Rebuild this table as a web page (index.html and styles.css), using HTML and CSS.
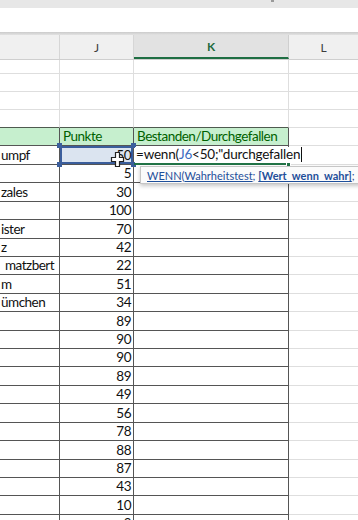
FILE: index.html
```html
<!DOCTYPE html>
<html lang="de">
<head>
<meta charset="utf-8">
<title>Excel</title>
<link rel="stylesheet" href="styles.css">
</head>
<body>
<div class="topbar"><span class="tdot"></span></div>
<div class="formula"></div>
<div class="divider"></div>
<div class="colheads">
  <div class="ch"></div>
  <div class="ch">J</div>
  <div class="ch sel">K</div>
  <div class="ch last">L</div>
</div>
<div class="sheet">
  <div class="c"></div><div class="c"></div><div class="c"></div><div class="c l"></div>
  <div class="c"></div><div class="c"></div><div class="c"></div><div class="c l"></div>
  <div class="c"></div><div class="c"></div><div class="c"></div><div class="c l"></div>
  <div class="c top"></div><div class="c top"></div><div class="c top"></div><div class="c l"></div>

  <div class="c t h"></div><div class="c t h">Punkte</div><div class="c t h">Bestanden/Durchgefallen</div><div class="c l"></div>

  <div class="c t">umpf</div>
  <div class="c t n ref">50
    <span class="hnd tl"></span><span class="hnd tr"></span><span class="hnd bl"></span><span class="hnd br"></span>
    <svg class="cursor" width="15" height="16" viewBox="0 0 15 16"><path d="M5.5 1.5h4v5h4v4h-4v5h-4v-5h-4v-4h4z" fill="#fff" stroke="#222" stroke-width="1.2"/></svg>
  </div>
  <div class="c t edit"><span class="etext">=wenn(<span class="refc">J6</span>&lt;50;"durchgefallen<span class="caret"></span></span>
    <span class="fill"></span>
    <div class="tip"><u>WENN</u>(<u>Wahrheitstest</u>; <b><u>[Wert_wenn_wahr]</u></b>; [</div>
  </div>
  <div class="c l"></div>

  <div class="c t"></div><div class="c t n">5</div><div class="c t"></div><div class="c l"></div>
  <div class="c t">zales</div><div class="c t n">30</div><div class="c t"></div><div class="c l"></div>
  <div class="c t"></div><div class="c t n">100</div><div class="c t"></div><div class="c l"></div>
  <div class="c t">ister</div><div class="c t n">70</div><div class="c t"></div><div class="c l"></div>
  <div class="c t">z</div><div class="c t n">42</div><div class="c t"></div><div class="c l"></div>
  <div class="c t ind">matzbert</div><div class="c t n">22</div><div class="c t"></div><div class="c l"></div>
  <div class="c t">m</div><div class="c t n">51</div><div class="c t"></div><div class="c l"></div>
  <div class="c t">ümchen</div><div class="c t n">34</div><div class="c t"></div><div class="c l"></div>
  <div class="c t"></div><div class="c t n">89</div><div class="c t"></div><div class="c l"></div>
  <div class="c t"></div><div class="c t n">90</div><div class="c t"></div><div class="c l"></div>
  <div class="c t"></div><div class="c t n">90</div><div class="c t"></div><div class="c l"></div>
  <div class="c t"></div><div class="c t n">89</div><div class="c t"></div><div class="c l"></div>
  <div class="c t"></div><div class="c t n">49</div><div class="c t"></div><div class="c l"></div>
  <div class="c t"></div><div class="c t n">56</div><div class="c t"></div><div class="c l"></div>
  <div class="c t"></div><div class="c t n">78</div><div class="c t"></div><div class="c l"></div>
  <div class="c t"></div><div class="c t n">88</div><div class="c t"></div><div class="c l"></div>
  <div class="c t"></div><div class="c t n">87</div><div class="c t"></div><div class="c l"></div>
  <div class="c t"></div><div class="c t n">43</div><div class="c t"></div><div class="c l"></div>
  <div class="c t"></div><div class="c t n">10</div><div class="c t"></div><div class="c l"></div>
  <div class="c t"></div><div class="c t n">9</div><div class="c t"></div><div class="c l"></div>
</div>
</body>
</html>
```
FILE: styles.css
```css
* { box-sizing: border-box; }
html, body { margin: 0; padding: 0; }
body {
  width: 358px;
  height: 520px;
  overflow: hidden;
  background: #fff;
  font-family: Lato, "Liberation Sans", sans-serif;
  color: #111;
}
.topbar {
  height: 8px;
  background: #e7e7e7;
  display: flex;
  padding-left: 271px;
}
.tdot { width: 3px; height: 2px; background: #9a9a9a; }
.formula { height: 24px; background: #fff; }
.divider { height: 3px; background: linear-gradient(#cbcbcb, #e2e2e2); }

.colheads {
  display: grid;
  grid-template-columns: 60px 74px 155px 69px;
  height: 25px;
  background: #f0f0f0;
  border-bottom: 1px solid #cfcfcf;
}
.ch {
  display: flex;
  align-items: center;
  justify-content: center;
  font-size: 12px;
  color: #3c3c3c;
  border-right: 1px solid #d6d6d6;
}
.ch.sel {
  background: #e2e2e2;
  color: #1f6b3d;
  font-weight: bold;
  border-bottom: 2px solid #1f6e43;
  border-right-color: #cfcfcf;
}
.ch.last { border-right: none; }

.sheet {
  display: grid;
  grid-template-columns: 60px 74px 155px 69px;
  grid-template-rows: 14px 18px 18px 18px;
  grid-auto-rows: 18.43px;
}
.c {
  border-right: 1px solid #dedede;
  border-bottom: 1px solid #dedede;
  font-size: 13.5px;
  letter-spacing: -0.5px;
  line-height: 15px;
  display: flex;
  align-items: flex-end;
  padding: 0 2px 1px 1px;
  white-space: nowrap;
  overflow: hidden;
}
.c.l { border-right: none; }
.c.top { border-bottom-color: #4f5a4f; }
.c.t { border-color: #555; }
.c.n { justify-content: flex-end; }
.c.h { background: #c6efce; color: #006100; padding-left: 3px; }
.c.ind { padding-left: 5px; }

.c.ref {
  position: relative;
  overflow: visible;
  background: #dbe4f0;
  box-shadow: inset 0 0 0 2px #3b5e9c;
}
.hnd {
  position: absolute;
  width: 5px;
  height: 5px;
  background: #3b5e9c;
}
.hnd.tl { left: -3px; top: -3px; }
.hnd.tr { right: -3px; top: -3px; }
.hnd.bl { left: -3px; bottom: -3px; }
.hnd.br { right: -3px; bottom: -3px; }
.cursor { position: absolute; left: 50px; top: 5px; }

.c.edit {
  position: relative;
  z-index: 2;
  overflow: visible;
  border-bottom: 2px solid #217346;
  padding-bottom: 0;
  letter-spacing: -0.2px;
}
.etext {
  display: flex;
  align-items: center;
  background: #fff;
  padding: 0 2px 1px 1px;
  height: 16px;
}
.refc { color: #3c6cc0; }
.caret {
  display: inline-block;
  width: 1px;
  height: 15px;
  background: #111;
  margin-left: 1px;
}
.fill {
  position: absolute;
  right: -3px;
  bottom: -4px;
  width: 5px;
  height: 5px;
  background: #217346;
  border: 1px solid #fff;
}
.tip {
  position: absolute;
  left: 6px;
  top: 20px;
  height: 18px;
  padding: 1px 0 0 6px;
  width: 230px;
  background: #fbfbfb;
  border: 1px solid #c6c6c6;
  box-shadow: 0 2px 4px rgba(0,0,0,0.22);
  font-size: 11px;
  line-height: 15px;
  letter-spacing: 0;
  color: #1f4f9a;
  white-space: nowrap;
}
.tip u { text-decoration-thickness: 1px; text-underline-offset: 1px; }
```
